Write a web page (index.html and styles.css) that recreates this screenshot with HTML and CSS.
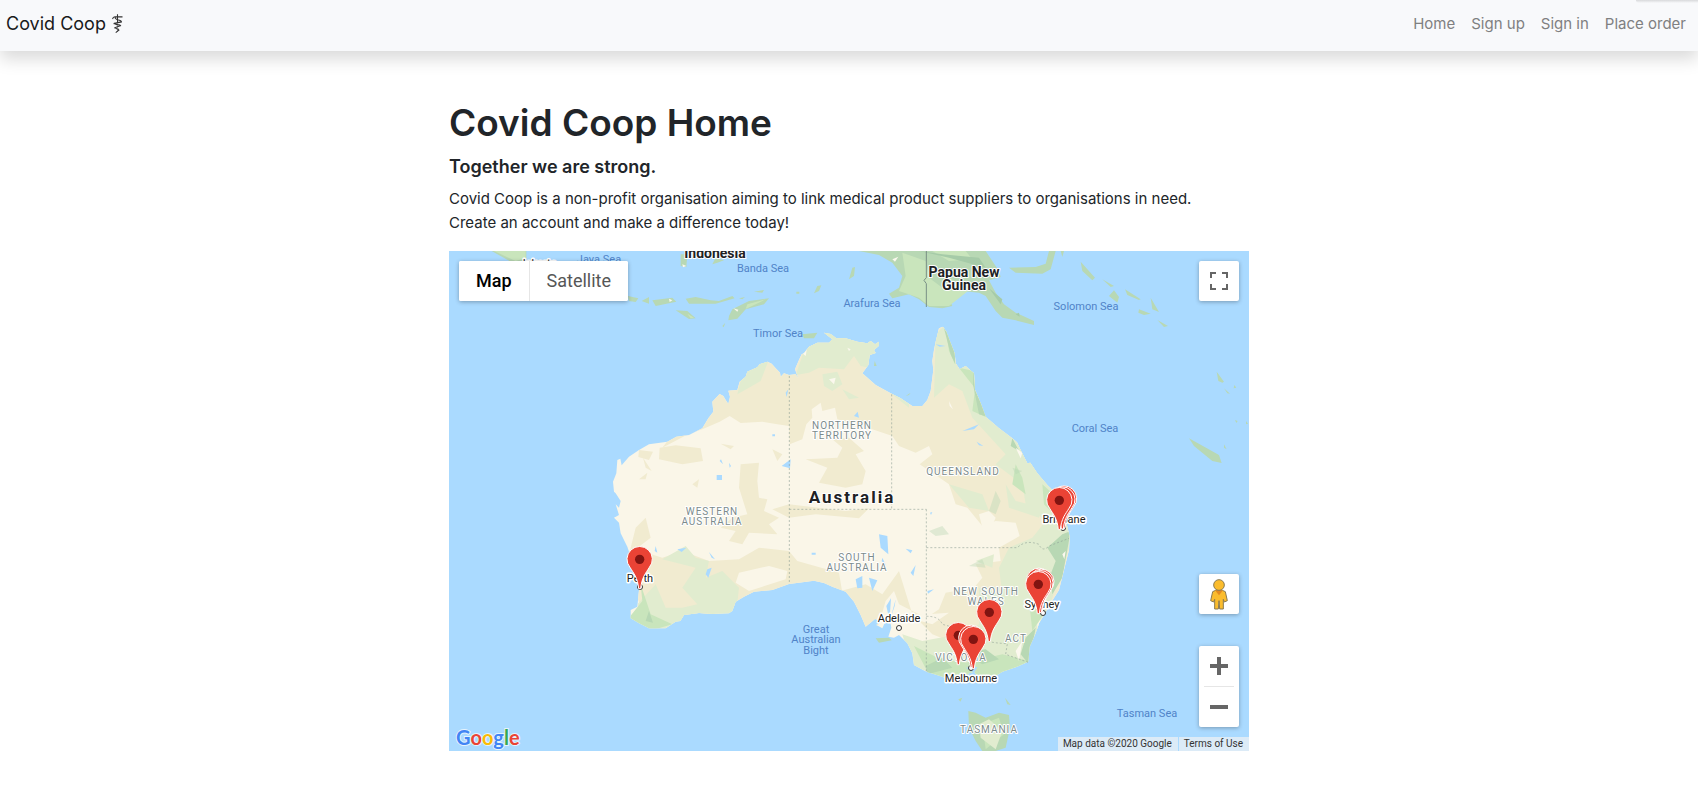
FILE: index.html
```
<!DOCTYPE html>
<html lang="en">
<head>
<meta charset="utf-8">
<title>Covid Coop</title>
<link rel="stylesheet" href="styles.css">
</head>
<body>
<nav class="navbar">
  <a class="brand" href="#">Covid Coop
    <svg class="brand-icon" viewBox="0 0 30 56" aria-hidden="true"><path d="M15 1V24M1 14Q3 7 9 8H29M9 8Q7 13 15 16Q27 18 26 23M27 22Q16 24 4 27M5 26Q12 31 23 31M25 32Q14 36 6 39M8 38Q14 43 19 43M20 44L10 52"/><path d="M15 24V50" stroke-width="1"/></svg>
  </a>
  <div class="links">
    <a href="#">Home</a>
    <a href="#">Sign up</a>
    <a href="#">Sign in</a>
    <a href="#">Place order</a>
  </div>
</nav>
<main class="container">
  <h1>Covid Coop Home</h1>
  <h2>Together we are strong.</h2>
  <p>Covid Coop is a non-profit organisation aiming to link medical product suppliers to organisations in need. <br>Create an account and make a difference today!</p>
  <section class="map" aria-label="Map">
    <svg class="map-canvas" viewBox="0 0 800 500" preserveAspectRatio="xMidYMid slice">
      <defs>
        <path id="land" d="M495 722L492 692 502 667 505 627 514 623 518 643 540 617 570 597 600 580 655 572 682 557 720 552 760 532 778 502 793 482 790 452 812 429 823 435 830 447 838 459 843 437 838 419 865 417 872 392 890 377 895 362 925 349 932 340 955 332 968 338 980 352 993 365 995 377 1005 367 1020 372 1040 370 1048 382 1038 355 1050 327 1058 310 1065 307 1080 287 1105 275 1140 275 1150 265 1125 245 1145 249 1162 262 1190 262 1225 272 1255 277 1265 270 1278 280 1290 272 1290 284 1275 297 1280 306 1262 312 1258 342 1240 367 1280 402 1325 427 1355 442 1390 465 1420 465 1435 447 1445 420 1453 357 1450 330 1455 297 1460 272 1470 232 1482 227 1492 242 1505 277 1517 307 1520 337 1532 355 1550 345 1564 358 1575 367 1578 417 1588 440 1595 457 1610 497 1650 532 1690 562 1704 574 1715 597 1735 637 1744 635 1765 667 1795 702 1820 727 1835 765 1850 807 1862 857 1860 897 1845 957 1830 1017 1805 1057 1785 1092 1770 1117 1760 1147 1742 1187 1738 1232 1700 1249 1660 1262 1635 1278 1615 1295 1600 1284 1582 1272 1576 1262 1560 1266 1552 1278 1530 1279 1508 1291 1480 1277 1432 1262 1395 1242 1390 1207 1375 1177 1350 1152 1335 1160 1318 1157 1327 1130 1322 1100 1326 1042 1312 1065 1318 1092 1300 1132 1282 1122 1296 1110 1278 1104 1250 1127 1235 1092 1215 1052 1190 1022 1170 1015 1150 1007 1125 996 1095 989 1020 999 970 1017 915 1022 885 1037 860 1052 850 1080 840 1087 790 1089 750 1086 705 1092 694 1110 680 1112 650 1132 600 1132 570 1117 545 1102 545 1077 565 1067 570 1017 555 947 535 887 515 847 510 815 495 800 510 792 500 760 510 770 515 750 500 727Z"/>
        <clipPath id="land-clip"><use href="#land"/></clipPath>
        <g id="pin">
          <path d="M-3 88C-6 54-19 41-29 24A38 38 0 1 1 29 24C19 41 6 54 3 88Z" fill="#ea4335" stroke="#fff" stroke-width="3"/>
          <circle r="14" fill="#811411"/>
        </g>
      </defs>
      <rect width="800" height="500" fill="#aadaff"/>
      <g transform="scale(.333333)">
        <use href="#land" fill="#faf6e8"/>
        <g clip-path="url(#land-clip)">
          <path fill="#f1ebd0" d="M640 590L720 548 760 535 812 512 842 495 875 516 940 512 985 520 1020 525 1022 580 1060 565 1072 520 1090 500 1088 475 1115 455 1120 480 1158 470 1165 505 1270 535 1330 555 1350 585 1400 605 1440 585 1450 610 1412 640 1450 665 1500 700 1520 760 1555 770 1600 825 1640 810 1700 815 1712 855 1650 890 1655 930 1580 940 1600 980 1575 1010 1490 1025 1470 1075 1432 1100 1390 1080 1350 1060 1335 1020 1310 1050 1290 1120 1240 1150 1175 1020 1250 1000 1300 1030 1350 960 1390 1090 1450 1150 1700 1250 1900 900 1800 600 1500 200 1100 220 800 380Z"/>
          <path fill="#f1ebd0" d="M632 590L680 583 755 592 762 630 700 640 630 625ZM570 597L612 602 600 627 568 618ZM582 620L608 660 590 650ZM875 640L930 635 925 690 930 740 955 745 945 780 990 800 960 820 985 850 900 845 880 880 840 870 860 840 815 830 850 800 895 790 870 710ZM1070 625L1165 620 1180 590 1150 565 1200 560 1245 600 1220 610 1250 660 1240 700 1190 710 1110 695 1135 650ZM970 595L1000 610 985 630ZM815 578L855 585 845 595ZM570 685L595 665 590 685ZM730 700L750 685 745 710ZM1020 760L1190 780 1260 772 1230 802 1100 790 1020 800 970 775ZM560 830L590 800 605 860 560 895 640 920 700 900 780 930 870 925 930 890 1020 900 1045 930 1170 965 1180 1025 900 1060 600 1130 530 950Z"/>
          <path fill="#faf6e8" d="M870 965L960 945 1015 960 1010 985 900 1020 860 995ZM1590 790L1620 780 1640 800 1620 845 1600 830ZM1360 1095L1500 1085 1450 1120ZM1240 550L1290 570 1300 620 1270 610Z"/>
          <path fill="#e1eccf" d="M1040 372L1065 300 1130 235 1300 260 1260 350 1235 345 1215 315 1185 355 1110 350 1080 365ZM865 430L885 350 960 325 935 390 900 410ZM1120 370L1165 362 1180 400 1150 420 1125 405ZM1180 415L1230 440 1200 445ZM1325 427L1380 445 1380 470ZM1455 440L1460 250 1490 220 1580 360 1605 490 1700 570 1840 740 1870 860 1750 1220 1600 1300 1390 1250 1360 1150 1420 1170 1530 1150 1590 1120 1590 1010 1660 1030 1650 950 1680 890 1750 860 1790 810 1730 760 1720 700 1640 640 1670 610 1570 500 1540 420 1500 400ZM640 925L710 885 740 920 780 930 770 980 820 960 870 1010 860 1100 600 1140 565 1060 620 1000 650 1070 700 1070 745 1060 700 1010 740 950ZM1500 700L1600 730 1620 780 1560 770ZM1670 700L1700 750 1780 770 1770 800 1680 770ZM1580 930L1635 910 1630 950Z"/>
          <path fill="#c9e5bc" d="M1490 230L1515 300 1518 340 1500 300ZM1530 350L1575 360 1577 410 1545 370ZM1580 400L1615 500 1570 480ZM1395 1185L1475 1225 1550 1235 1660 1210 1740 1230 1640 1290 1450 1290ZM1750 1140L1740 1050 1790 1080ZM575 1000L605 1090 670 1120 600 1140 540 1100 580 1050ZM1700 640L1720 680 1730 730 1690 700ZM1780 700L1830 745 1835 810 1785 760Z"/>
          <path fill="#b8d8b4" d="M1485 232L1515 270 1519 340 1505 310ZM1574 360L1578 417 1615 497 1590 490 1572 400ZM1865 840L1840 980 1810 1030 1805 970 1820 930 1795 890 1840 850ZM1760 1130L1740 1240 1715 1210 1730 1160ZM600 1080L612 1115 590 1110ZM1690 562L1710 600 1685 585ZM1540 1205L1610 1195 1650 1225 1600 1240ZM1480 1220L1510 1250 1435 1270 1430 1245Z"/>
          <path fill="#b8d8b4" opacity=".4" d="M1440 840L1480 825 1500 850 1460 855ZM1560 945L1600 925 1610 950ZM1620 780L1640 720 1655 750 1640 790ZM1690 650L1720 660 1700 670Z"/>
          <path fill="#fbf8ee" d="M1060 307L1075 285 1070 315ZM1195 290L1205 295 1200 300ZM1840 910L1850 900 1846 925ZM1765 1120L1775 1105 1765 1145ZM1700 590L1720 605 1715 622ZM1500 450L1512 475 1502 465ZM1700 1200L1720 1170 1710 1230ZM1140 385L1160 380 1155 400Z"/>
        </g>
        <g fill="#aadaff">
          <path d="M998 645L1025 625 1023 652ZM803 672h16v15h-16ZM1230 500L1226 482 1215 495ZM1290 850L1315 855 1318 910 1295 890ZM1385 965L1400 942 1393 975ZM1220 985L1240 975 1240 1010 1225 1012ZM1260 980L1285 988 1270 1020ZM1300 920L1312 945 1298 930ZM1370 893L1390 898 1385 907ZM1443 785L1450 783 1446 792ZM1088 905h12v6h-12ZM1583 572L1603 585 1590 583ZM1540 540L1590 520 1575 535ZM685 895L712 890 698 903ZM620 885L625 905 617 900ZM775 955L788 950 778 980 770 970ZM816 625L822 640 812 630ZM840 635L846 645 842 650ZM1010 425L1018 415 1013 438ZM970 550h8v6h-8ZM780 903L798 925 788 920ZM1340 1045L1325 1100 1337 1065ZM1550 1250L1585 1248 1575 1265ZM1435 1020L1455 1015 1437 1028ZM1460 280L1490 285 1472 287Z"/>
        </g>
        <g fill="#b8d8b4">
          <path d="M128 0H232V32L190 35ZM1230 0H1610L1650 60 1655 78 1620 88 1640 125 1665 160 1700 185 1755 210 1755 222 1700 208 1660 200 1640 180 1610 135 1590 125 1540 120 1500 140 1510 165 1480 172 1440 168 1410 145 1380 130 1330 142 1320 128 1350 110 1360 75 1330 35 1290 12ZM1680 50L1760 48 1790 38 1800 0H1820L1805 55 1780 68 1700 65ZM1835 0H1845L1840 18ZM1895 32L1938 80 1930 88 1900 60ZM1960 85L1995 105 1985 108ZM1995 118L2010 138 2005 155 1980 135ZM2028 115L2075 145 2070 147 2035 132ZM2105 140L2130 183 2110 175ZM2070 175L2105 188 2085 192 2068 185ZM2125 207L2157 225 2145 228ZM2303 362L2325 392 2320 395 2308 390ZM2325 412L2343 428 2335 427ZM2220 562L2310 612 2318 636 2290 630 2235 585ZM2325 580L2333 595 2325 590ZM2358 507l8 3-4 6ZM2356 402l6 8-8 2ZM2391 510l6 8-6 2Z"/>
          <path d="M537 135L568 142 560 153 540 150ZM578 150L600 138 600 158ZM610 148L670 140 682 152 620 165ZM710 143L740 138 785 148 810 150 850 135 857 142 800 158 720 158ZM680 178L715 180 740 202 720 204ZM840 195L850 175 900 150 960 142 945 160 890 175 865 203 838 208ZM820 225L829 215 824 229ZM915 122L945 117 940 125ZM1095 127L1105 105 1117 103 1110 120ZM870 142L888 138 880 145ZM1200 85L1210 50 1218 48 1215 75ZM695 10H715L712 48 695 45ZM1042 122h9v6h-9ZM790 40L800 20 825 28 805 35Z"/>
          <path d="M1060 250L1105 245 1095 262 1065 262ZM1277 330L1283 345H1275ZM1370 435L1385 425 1380 432ZM1280 1162L1320 1160 1328 1168 1290 1175ZM1528 1345L1540 1340 1534 1352ZM1668 1340L1685 1362 1675 1360ZM1558 1380L1580 1385 1610 1400 1650 1385 1680 1392 1683 1430 1670 1490 1640 1500H1600L1580 1470 1560 1430Z"/>
        </g>
        <path fill="#c9e5bc" d="M1360 5L1430 30 1440 80 1480 110 1500 80 1560 118 1500 165 1440 165 1410 140 1350 120 1370 75ZM135 0H230V20L200 30ZM895 160L950 145 890 174ZM715 188L735 200 725 202ZM1450 0H1550L1570 25 1500 30ZM1600 1420L1650 1400 1665 1450 1610 1495Z"/>
        <path fill="#e1eccf" d="M1590 1420L1620 1405 1660 1440 1640 1495 1595 1460Z"/>
        <path fill="#fbf8ee" d="M853 172L868 176 865 182ZM660 143L670 148 662 153ZM1330 25l18-8-10 15ZM700 40l12 5-10 4Z"/>
        <path fill="#a6cba8" d="M1410 0L1500 20 1610 50 1590 20 1480 10ZM1620 112L1660 145 1655 160ZM1700 190l10-5 2 12Z"/>
        <g fill="none" stroke="#8f9f95" stroke-width="3" stroke-dasharray="6 6" opacity=".6">
          <path d="M1021 375V997M1021 775H1432M1328 430V775M1432 775V1262M1432 890H1705Q1730 865 1770 880 1780 905 1800 885L1860 862M1432 1096Q1470 1095 1480 1120 1520 1130 1560 1150 1600 1175 1675 1178L1670 1210 1740 1235"/>
        </g>
        <path d="M1432 0V80L1425 88 1432 98V168" fill="none" stroke="#789085" stroke-width="3"/>
      </g>
      <g class="label sea">
        <text x="150" y="12">Java Sea</text><text x="314" y="21">Banda Sea</text><text x="423" y="56">Arafura Sea</text><text x="637" y="59">Solomon Sea</text><text x="646" y="181">Coral Sea</text><text x="329" y="86">Timor Sea</text><text x="367" y="382">Great</text><text x="367" y="392">Australian</text><text x="367" y="403">Bight</text><text x="698" y="466">Tasman Sea</text>
      </g>
      <g class="label state">
        <text x="393" y="178">NORTHERN</text><text x="393" y="188">TERRITORY</text><text x="514" y="224">QUEENSLAND</text><text x="263" y="264">WESTERN</text><text x="263" y="274">AUSTRALIA</text><text x="408" y="310">SOUTH</text><text x="408" y="320">AUSTRALIA</text><text x="537" y="344">NEW SOUTH</text><text x="537" y="354">WALES</text><text x="567" y="391">ACT</text><text x="512" y="410">VICTORIA</text><text x="540" y="482">TASMANIA</text>
      </g>
      <g class="label country">
        <text x="266" y="7">Indonesia</text><text x="515" y="26">Papua New</text><text x="515" y="39">Guinea</text><text class="focus" x="403" y="252">Australia</text>
      </g>
      <g class="label city">
        <text x="89" y="16">Jakarta</text><text x="191" y="331">Perth</text><text x="450" y="371">Adelaide</text><text x="522" y="431">Melbourne</text><text x="593" y="357">Sydney</text><text x="615" y="272">Brisbane</text>
      </g>
      <g fill="#fff" stroke="#333" stroke-width="1">
        <circle cx="191" cy="336" r="2.5"/><circle cx="450" cy="377" r="2.5"/><circle cx="522" cy="417" r="2.5"/><circle cx="594" cy="362" r="2.5"/><circle cx="614" cy="277" r="2.5"/>
      </g>
      <g transform="scale(.333333)">
        <use href="#pin" x="572" y="925"/>
        <use href="#pin" x="1845" y="743"/><use href="#pin" x="1840" y="746"/><use href="#pin" x="1831" y="748"/>
        <use href="#pin" x="1770" y="990"/><use href="#pin" x="1777" y="993"/><use href="#pin" x="1774" y="997"/><use href="#pin" x="1768" y="1000"/>
        <use href="#pin" x="1621" y="1084"/><use href="#pin" x="1528" y="1153"/><use href="#pin" x="1567" y="1161"/><use href="#pin" x="1573" y="1165"/>
      </g>
    </svg>
    <div class="map-types">
      <button type="button" class="active">Map</button>
      <button type="button">Satellite</button>
    </div>
    <button type="button" class="control fullscreen" aria-label="Toggle fullscreen view">
      <svg width="18" height="18" viewBox="0 0 18 18"><path d="M1 6V1H6M12 1H17V6M17 12V17H12M6 17H1V12" fill="none" stroke="#666" stroke-width="2"/></svg>
    </button>
    <div class="side-controls">
      <button type="button" class="control" aria-label="Street View">
        <svg width="18" height="31" viewBox="0 0 54 93"><path d="M17 34L8 38 2 65 11 69 14 61V90H25L27 65 29 90H40V61L43 69 52 65 46 38 37 34Z" fill="#fbbc2c" stroke="#8a7a50" stroke-width="3"/><path d="M15 34H39L27 49Z" fill="#e58a20"/><circle cx="27" cy="18" r="16" fill="#fbbc2c" stroke="#8a7a50" stroke-width="3"/></svg>
      </button>
      <div class="zoom">
        <button type="button" aria-label="Zoom in"><svg width="18" height="18" viewBox="0 0 18 18"><path d="M7 0h4v7h7v4h-7v7H7v-7H0V7h7z" fill="#666"/></svg></button>
        <button type="button" aria-label="Zoom out"><svg width="18" height="18" viewBox="0 0 18 18"><path d="M0 7h18v4H0z" fill="#666"/></svg></button>
      </div>
    </div>
    <a class="google" href="#"><span class="blue">G</span><span class="red">o</span><span class="yellow">o</span><span class="blue">g</span><span class="green">l</span><span class="red">e</span></a>
    <div class="credits"><span>Map data ©2020 Google</span><a href="#">Terms of Use</a></div>
  </section>
</main>
</body>
</html>
```
FILE: styles.css
```
* { box-sizing: border-box; }
body { margin: 0; background: #fff; color: #212529; font: 15px/24px Inter, "Liberation Sans", sans-serif; }
a { color: inherit; text-decoration: none; }
button { border: 0; padding: 0; background: #fff; font: inherit; cursor: pointer; }
.navbar { position: relative; display: flex; justify-content: space-between; align-items: center; height: 51px; padding: 0 12px 4px 6px; background: #f8f9fb; box-shadow: 0 8px 16px rgba(0, 0, 0, .15); }
.navbar::after { content: ""; position: absolute; top: 0; right: 0; width: 62px; height: 3px; background: linear-gradient(#d8d9db, #f8f9fb); border-bottom-left-radius: 3px; }
.brand { display: flex; align-items: center; gap: 6px; color: #191a1b; font-size: 18px; }
.brand-icon { width: 11px; height: 20px; fill: none; stroke: #333; stroke-width: 3; }
.links { display: flex; gap: 16px; color: #7f8081; }
.container { max-width: 800px; margin: 0 auto; padding-top: 48px; }
h1, h2 { margin: 0 0 8px; font-weight: 600; }
h1 { font-size: 37px; line-height: 48px; }
h2 { font-size: 18px; line-height: 24px; }
p { margin: 0 0 16px; }
.map { position: relative; height: 500px; overflow: hidden; font-family: Roboto, sans-serif; }
.map-canvas { display: block; width: 100%; height: 100%; }
.label { text-anchor: middle; paint-order: stroke; stroke-linejoin: round; }
.sea { fill: #5083c8; font-size: 11px; }
.state { fill: #7c8b8c; stroke: #fff; stroke-width: 2px; font-size: 10px; letter-spacing: 1px; }
.country { fill: #202124; stroke: #fff; stroke-width: 2px; font-size: 14px; font-weight: 700; }
.focus { font-size: 17px; letter-spacing: 2px; }
.city { fill: #222; stroke: #fff; stroke-width: 3px; font-size: 11px; }
.map-types, .control, .zoom { border-radius: 2px; background: #fff; box-shadow: 0 1px 4px rgba(0, 0, 0, .3); }
.map-types { position: absolute; top: 10px; left: 10px; display: flex; overflow: hidden; font-size: 18px; }
.map-types button { height: 40px; padding: 0 17px; color: #565656; }
.map-types .active { color: #000; font-weight: 500; border-right: 1px solid #e6e6e6; }
.control { display: grid; place-items: center; width: 40px; height: 40px; }
.fullscreen { position: absolute; top: 10px; right: 10px; }
.side-controls { position: absolute; right: 10px; bottom: 24px; display: grid; gap: 32px; }
.zoom { display: grid; width: 40px; }
.zoom button { display: grid; place-items: center; height: 40px; background: none; }
.zoom button + button { position: relative; height: 41px; }
.zoom button + button::before { content: ""; position: absolute; top: 0; left: 5px; right: 5px; height: 1px; background: #e6e6e6; }
.google { position: absolute; left: 7px; bottom: 2px; font: 20px/24px Lato, sans-serif; font-weight: 700; -webkit-text-stroke: 2px #e5f3fd; paint-order: stroke; }
.blue { color: #4285f4; }
.red { color: #ea4335; }
.yellow { color: #fbbc05; }
.green { color: #34a853; }
.credits { position: absolute; right: 0; bottom: 0; display: flex; gap: 1px; color: #333; font-size: 10px; line-height: 14px; }
.credits > * { padding: 0 6px 0 5px; background: #dcebf7; }
```
